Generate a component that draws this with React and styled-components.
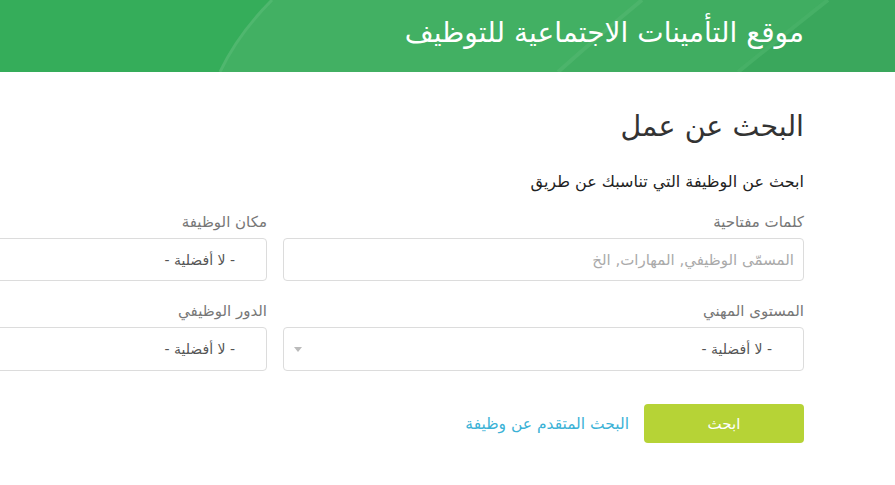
import React from 'react';
import styled, { createGlobalStyle } from 'styled-components';

const GlobalStyle = createGlobalStyle`
  html, body {
    margin: 0;
    padding: 0;
    background: #fff;
    overflow: hidden;
  }
  body {
    font-family: "DejaVu Sans", "Noto Sans", sans-serif;
    direction: rtl;
  }
`;

const Header = styled.header`
  position: relative;
  height: 72px;
  background: #35ad5a;
  display: flex;
  align-items: center;
  padding-right: 91px;
  overflow: hidden;
`;

const HeaderArt = styled.svg`
  position: absolute;
  inset: 0;
  width: 100%;
  height: 100%;
`;

const SiteTitle = styled.h1`
  position: relative;
  margin: 0 0 8px;
  font-size: 28px;
  font-weight: normal;
  color: #fff;
  white-space: nowrap;
`;

const Main = styled.main`
  padding: 37px 91px 0 0;
`;

const PageTitle = styled.h2`
  margin: 0;
  font-size: 28.5px;
  line-height: 36px;
  font-weight: normal;
  color: #333;
`;

const Intro = styled.p`
  margin: 27px 0 0;
  font-size: 16px;
  line-height: 20px;
  color: #222;
`;

const FieldGrid = styled.div`
  display: grid;
  grid-template-columns: 521px 521px;
  column-gap: 16px;
  row-gap: 20px;
  margin-top: 20px;
  width: 1058px;
`;

const Field = styled.div`
  display: flex;
  flex-direction: column;
  gap: 6px;
`;

const Label = styled.label`
  font-size: 15px;
  line-height: 20px;
  color: #777;
`;

const TextInput = styled.input`
  box-sizing: border-box;
  height: 43px;
  border: 1px solid #dcdcdc;
  border-radius: 4px;
  padding: 0 9px;
  font-family: inherit;
  font-size: 15px;
  color: #333;
  direction: rtl;
  outline: none;
  &::placeholder {
    color: #aaa;
  }
`;

const SelectBox = styled.div`
  box-sizing: border-box;
  height: ${p => (p.$tall ? 44 : 43)}px;
  border: 1px solid #dcdcdc;
  border-radius: 4px;
  display: flex;
  align-items: center;
  justify-content: space-between;
  padding: 0 31px 0 10px;
  font-size: 14px;
  color: #555;
`;

const Caret = styled.span`
  width: 0;
  height: 0;
  border-left: 4px solid transparent;
  border-right: 4px solid transparent;
  border-top: 5px solid #bbb;
`;

const Actions = styled.div`
  display: flex;
  align-items: center;
  gap: 15px;
  margin-top: 33px;
`;

const SearchButton = styled.button`
  width: 160px;
  height: 39px;
  border: none;
  border-radius: 4px;
  background: #b6d336;
  color: #fff;
  font-family: inherit;
  font-size: 15px;
`;

const AdvancedLink = styled.a`
  font-size: 15.5px;
  color: #3bb2d6;
  text-decoration: none;
`;

export default function App() {
  return (
    <>
      <GlobalStyle />
      <Header>
        <HeaderArt viewBox="0 0 895 72" preserveAspectRatio="none">
          <path d="M272,0 Q238,34 220,72 L895,72 L895,0 Z" fill="#42b063" />
          <path d="M642,0 Q596,38 558,72 L895,72 L895,0 Z" fill="#40ad61" />
          <path d="M828,0 Q780,38 738,72 L895,72 L895,0 Z" fill="#3aa75c" />
          <path d="M272,0 Q238,34 220,72" fill="none" stroke="#4fb76e" strokeWidth="3" />
          <path d="M642,0 Q596,38 558,72" fill="none" stroke="#4cb46b" strokeWidth="4" />
          <path d="M828,0 Q780,38 738,72" fill="none" stroke="#46b066" strokeWidth="4" />
        </HeaderArt>
        <SiteTitle>موقع التأمينات الاجتماعية للتوظيف</SiteTitle>
      </Header>
      <Main>
        <PageTitle>البحث عن عمل</PageTitle>
        <Intro>ابحث عن الوظيفة التي تناسبك عن طريق</Intro>
        <FieldGrid>
          <Field>
            <Label>كلمات مفتاحية</Label>
            <TextInput placeholder="المسمّى الوظيفي, المهارات, الخ" />
          </Field>
          <Field>
            <Label>مكان الوظيفة</Label>
            <SelectBox>
              <span>- لا أفضلية -</span>
              <Caret />
            </SelectBox>
          </Field>
          <Field>
            <Label>المستوى المهني</Label>
            <SelectBox $tall>
              <span>- لا أفضلية -</span>
              <Caret />
            </SelectBox>
          </Field>
          <Field>
            <Label>الدور الوظيفي</Label>
            <SelectBox $tall>
              <span>- لا أفضلية -</span>
              <Caret />
            </SelectBox>
          </Field>
        </FieldGrid>
        <Actions>
          <SearchButton>ابحث</SearchButton>
          <AdvancedLink href="#">البحث المتقدم عن وظيفة</AdvancedLink>
        </Actions>
      </Main>
    </>
  );
}
